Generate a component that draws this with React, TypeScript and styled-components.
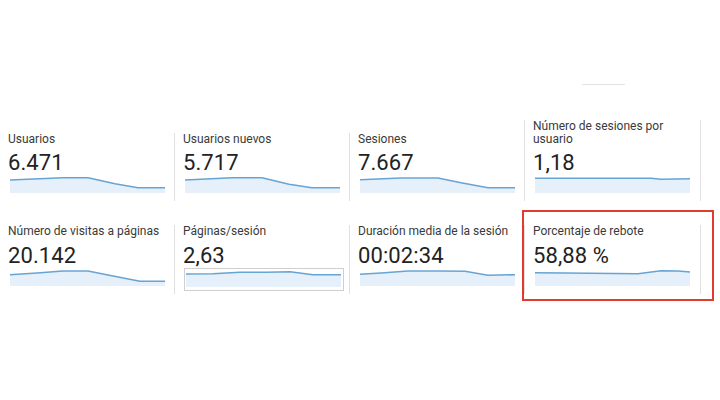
import React from "react";
import styled, { createGlobalStyle } from "styled-components";

const GlobalStyle = createGlobalStyle`
  html, body {
    margin: 0;
    padding: 0;
    background: #ffffff;
  }
  body {
    font-family: Roboto, "Noto Sans", "Liberation Sans", sans-serif;
    width: 720px;
    height: 400px;
    overflow: hidden;
  }
`;

const Page = styled.div`
  width: 720px;
  height: 400px;
  display: flex;
  flex-direction: column;
`;

const Header = styled.div`
  display: flex;
  padding: 84px 0 0 582px;
`;

const HeaderRule = styled.div`
  width: 43px;
  height: 1px;
  background: #e2e2e2;
`;

const Grid = styled.div`
  margin-top: 35px;
  display: grid;
  grid-template-columns: 174px 175px 175px 177px;
  row-gap: 24px;
  align-items: end;
`;

const Cell = styled.div<{ $first?: boolean; $last?: boolean }>`
  position: relative;
  display: flex;
  flex-direction: column;
  padding: 0 8px 8px 8px;
  border-left: ${(p) => (p.$first ? "none" : "1px solid #e0e0e0")};
  border-right: ${(p) => (p.$last ? "1px solid #e0e0e0" : "none")};
`;

const Label = styled.div`
  font-size: 12px;
  line-height: 12.5px;
  color: #3a3a3a;
  padding-right: 4px;
`;

const Value = styled.div`
  margin-top: 5px;
  font-size: 22px;
  line-height: 26px;
  color: #222222;
  letter-spacing: 0.1px;
`;

/* The framed variant (the selected chart) draws a thin grey box that
   spills below the row without taking extra height. */
const ChartBox = styled.div<{ $framed?: boolean }>`
  margin-top: ${(p) => (p.$framed ? "-1px" : "1px")};
  margin-left: ${(p) => (p.$framed ? "1px" : "2px")};
  margin-bottom: ${(p) => (p.$framed ? "-5px" : "0")};
  width: ${(p) => (p.$framed ? "156px" : "155px")};
  padding: ${(p) => (p.$framed ? "2px 1px 3px 1px" : "0")};
  border: ${(p) => (p.$framed ? "1px solid #cfcfcf" : "none")};
  height: 16px;
  line-height: 0;
  svg {
    display: block;
    overflow: visible;
  }
`;

const Highlight = styled.div`
  position: absolute;
  left: -3px;
  top: -15px;
  right: -14px;
  bottom: -7px;
  border: 2px solid #e23b2e;
  pointer-events: none;
`;

type Pt = [number, number];

const Sparkline: React.FC<{ points: Pt[] }> = ({ points }) => {
  const line = points.map(([x, y], i) => `${i ? "L" : "M"}${x} ${y}`).join(" ");
  const last = points[points.length - 1];
  const area = `${line} L${last[0]} 16 L${points[0][0]} 16 Z`;
  return (
    <svg width="155" height="16" viewBox="0 0 155 16" preserveAspectRatio="none">
      <path d={area} fill="#e5f0fa" />
      <path d={line} fill="none" stroke="#68a4d3" strokeWidth="1.6" strokeLinejoin="round" />
    </svg>
  );
};

type Metric = {
  label: string;
  value: string;
  points: Pt[];
  framed?: boolean;
  highlighted?: boolean;
};

const rows: Metric[][] = [
  [
    {
      label: "Usuarios",
      value: "6.471",
      points: [[0, 3], [53, 0.8], [78, 0.8], [105, 6.7], [128, 10.7], [155, 10.7]],
    },
    {
      label: "Usuarios nuevos",
      value: "5.717",
      points: [[0, 3], [47, 0.8], [77, 0.8], [104, 7.3], [127, 10.7], [155, 10.7]],
    },
    {
      label: "Sesiones",
      value: "7.667",
      points: [[0, 2.7], [41, 1], [78, 1], [101, 5.7], [128, 10.7], [155, 10.7]],
    },
    {
      label: "Número de sesiones por usuario",
      value: "1,18",
      points: [[0, 1.3], [116, 1.3], [126, 2.3], [155, 1.8]],
    },
  ],
  [
    {
      label: "Número de visitas a páginas",
      value: "20.142",
      points: [[0, 4.7], [27, 3], [53, 1], [78, 1], [103, 6], [130, 11.3], [155, 11.3]],
    },
    {
      label: "Páginas/sesión",
      value: "2,63",
      framed: true,
      points: [[0, 3], [27, 2.7], [54, 1.3], [81, 1.3], [104, 0.7], [127, 3.7], [155, 3.7]],
    },
    {
      label: "Duración media de la sesión",
      value: "00:02:34",
      points: [[0, 4.3], [21, 3], [48, 1], [78, 1], [105, 1.3], [128, 5.3], [155, 4.7]],
    },
    {
      label: "Porcentaje de rebote",
      value: "58,88 %",
      highlighted: true,
      points: [[0, 2.7], [30, 3], [103, 3.7], [126, 0.7], [143, 1], [155, 2]],
    },
  ],
];

export default function App() {
  return (
    <Page>
      <GlobalStyle />
      <Header>
        <HeaderRule />
      </Header>
      <Grid>
        {rows.map((row, r) =>
          row.map((m, i) => (
            <Cell key={`${r}-${i}`} $first={i === 0} $last={i === row.length - 1}>
              <Label>{m.label}</Label>
              <Value>{m.value}</Value>
              <ChartBox $framed={m.framed}>
                <Sparkline points={m.points} />
              </ChartBox>
              {m.highlighted && <Highlight />}
            </Cell>
          ))
        )}
      </Grid>
    </Page>
  );
}
